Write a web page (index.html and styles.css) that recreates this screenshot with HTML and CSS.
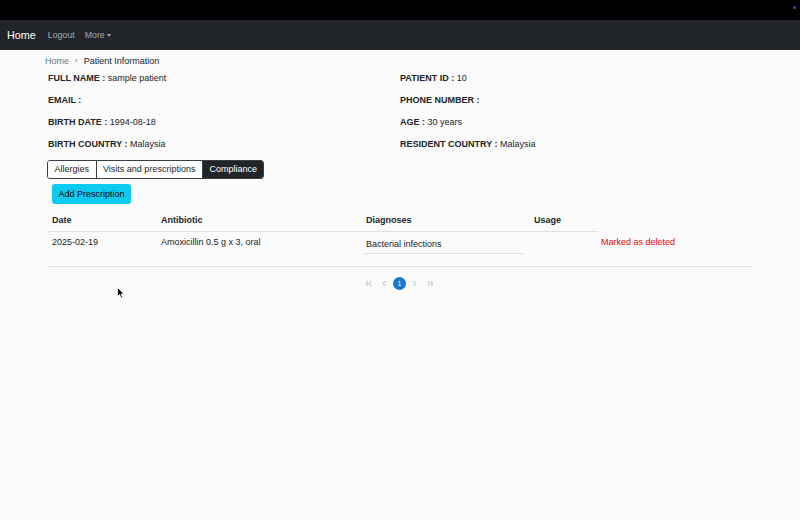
FILE: index.html
```html
<!DOCTYPE html>
<html>
<head>
<meta charset="utf-8">
<link rel="stylesheet" href="styles.css">
</head>
<body>
<div class="topbar"><span class="dot"></span></div>
<nav class="navbar">
  <span class="brand">Home</span>
  <span class="navlink">Logout</span>
  <span class="navlink">More <span class="caret"></span></span>
</nav>
<main class="container">
  <div class="breadcrumb"><span class="crumb-muted">Home</span><span class="sep">›</span><span>Patient Information</span></div>
  <div class="info">
    <div class="field"><b>FULL NAME :</b> sample patient</div>
    <div class="field"><b>PATIENT ID :</b> 10</div>
    <div class="field"><b>EMAIL :</b></div>
    <div class="field"><b>PHONE NUMBER :</b></div>
    <div class="field"><b>BIRTH DATE :</b> 1994-08-18</div>
    <div class="field"><b>AGE :</b> 30 years</div>
    <div class="field"><b>BIRTH COUNTRY :</b> Malaysia</div>
    <div class="field"><b>RESIDENT COUNTRY :</b> Malaysia</div>
  </div>
  <div class="tabs">
    <span class="tab">Allergies</span>
    <span class="tab">Visits and prescriptions</span>
    <span class="tab active">Compliance</span>
  </div>
  <div class="actions"><span class="btn">Add Prescription</span></div>
  <div class="table-wrap">
    <div class="table">
      <div class="thead">
        <div class="c1">Date</div>
        <div class="c2">Antibiotic</div>
        <div class="c3">Diagnoses</div>
        <div class="c4">Usage</div>
        <div class="c5 blank"></div>
      </div>
      <div class="row">
        <div class="c1">2025-02-19</div>
        <div class="c2">Amoxicillin 0.5 g x 3, oral</div>
        <div class="c3"><span class="diag">Bacterial infections</span></div>
        <div class="c4"></div>
        <div class="c5 deleted">Marked as deleted</div>
      </div>
    </div>
  </div>
  <div class="pager">
    <svg class="pg" width="9" height="9" viewBox="0 0 9 9"><path d="M2 2v5M6.5 2L4 4.5 6.5 7" fill="none" stroke="#aab0b8" stroke-width="1"/></svg>
    <svg class="pg" width="9" height="9" viewBox="0 0 9 9"><path d="M5.5 2L3 4.5 5.5 7" fill="none" stroke="#aab0b8" stroke-width="1"/></svg>
    <span class="page">1</span>
    <svg class="pg" width="9" height="9" viewBox="0 0 9 9"><path d="M3.5 2L6 4.5 3.5 7" fill="none" stroke="#aab0b8" stroke-width="1"/></svg>
    <svg class="pg" width="9" height="9" viewBox="0 0 9 9"><path d="M2.5 2L5 4.5 2.5 7M7 2v5" fill="none" stroke="#aab0b8" stroke-width="1"/></svg>
  </div>
</main>
<svg class="cursor" width="8" height="12" viewBox="0 0 8 12"><path d="M0.5 0.5v9l2-2 1.5 3.5 1.5-.6-1.5-3.4h3z" fill="#000" stroke="#fff" stroke-width="0.8"/></svg>
</body>
</html>
```
FILE: styles.css
```css
html, body { margin: 0; padding: 0; }
body {
  width: 800px; height: 520px; overflow: hidden;
  background: #fbfbfb;
  font-family: "Liberation Sans", Arial, sans-serif;
  font-size: 9px;
  color: #212529;
  position: relative;
}
.topbar { height: 20px; background: #000; position: relative; }
.dot { position: absolute; right: 4px; top: 6px; width: 3px; height: 3px; border-radius: 50%; background: #4a3fc0; }
.navbar {
  height: 30px; background: #212529; display: flex; align-items: center;
  padding-left: 7px;
}
.brand { color: #fff; font-size: 10.8px; margin-right: 12px; }
.navlink { color: rgba(255,255,255,0.6); font-size: 8.8px; margin-right: 10px; display: inline-flex; align-items: center; }
.caret { display: inline-block; margin-left: 2px; border-left: 2.5px solid transparent; border-right: 2.5px solid transparent; border-top: 3px solid rgba(255,255,255,0.6); }
.container { padding: 0 48px 0 47px; }
.breadcrumb { padding-top: 4px; height: 13px; display: flex; align-items: center; margin-left: -2px; }
.crumb-muted { color: #6c757d; }
.sep { color: #6c757d; margin: 0 6px; font-size: 8px; }
.info { display: grid; grid-template-columns: 352px 1fr; padding-left: 1px; }
.field { height: 22px; line-height: 22px; }
.field b { font-weight: bold; }
.tabs { display: inline-flex; margin-top: 5px; border: 1px solid #3a3f44; border-radius: 3px; overflow: hidden; }
.tab { padding: 0 6.5px; height: 17px; line-height: 17px; border-left: 1px solid #3a3f44; background: #fff; }
.tab:first-child { border-left: none; }
.tab.active { background: #212529; color: #fff; }
.actions { margin-top: 5px; padding-left: 5px; height: 20px; }
.btn { display: inline-block; background: #0dcaf0; color: #000; padding: 0 6.5px; height: 20px; line-height: 20px; border-radius: 3px; }
.table-wrap { margin-top: 4px; width: 705px; border-bottom: 1px solid #dee2e6; }
.table { display: grid; grid-template-columns: 114px 205px 168px 64px 1fr; }
.thead, .row { display: contents; }
.thead > div { font-weight: bold; height: 21px; padding-top: 2px; line-height: 21px; border-bottom: 1px solid #dee2e6; }
.thead > .blank { border-bottom: none; }
.thead > .c1 { padding-left: 5px; }
.row > div { box-sizing: border-box; height: 34px; padding-top: 5px; line-height: 10px; }
.row > .c1 { padding-left: 5px; }
.diag { display: block; border-bottom: 1px solid #dee2e6; padding: 2px 0 4px 3px; margin-left: -3px; margin-right: 10px; }
.deleted { color: #e00; padding-left: 3px; }
.pager { display: flex; justify-content: center; align-items: center; gap: 6px; width: 705px; padding-top: 10px; }
.page { width: 13px; height: 13px; margin: 0 -2px; border-radius: 50%; background: #1976d2; color: #fff; font-size: 7px; line-height: 13px; text-align: center; }
.cursor { position: absolute; left: 117px; top: 287px; }
```
